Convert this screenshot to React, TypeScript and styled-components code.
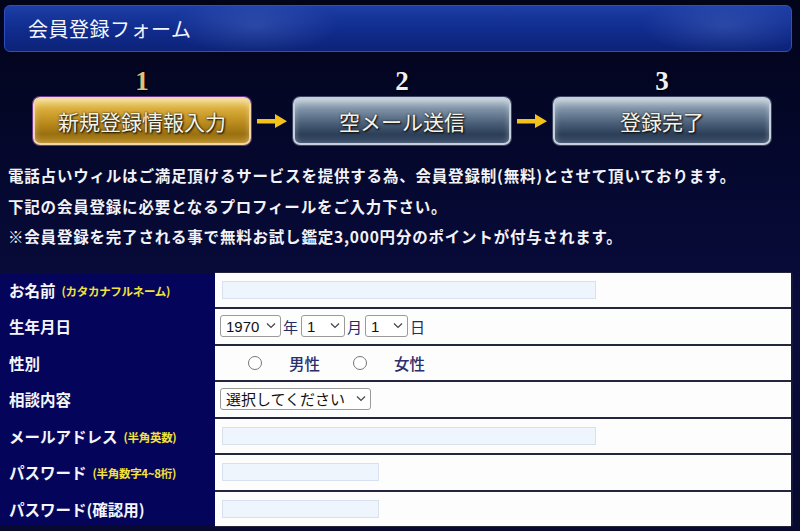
import React from 'react';
import styled, { createGlobalStyle } from 'styled-components';

const Global = createGlobalStyle`
  html, body { margin: 0; padding: 0; }
  body {
    background: #070a2c;
    font-family: "Noto Sans CJK JP", "Noto Sans", sans-serif;
  }
`;

const Page = styled.div`
  width: 800px;
  height: 531px;
  overflow: hidden;
  background: linear-gradient(180deg, #02041a 0%, #060933 40%, #0a0c3c 60%, #07092e 100%);
  padding-top: 5px;
  box-sizing: border-box;
`;

const Header = styled.div`
  margin: 0 8px 0 4px;
  height: 47px;
  box-sizing: border-box;
  border: 1px solid #2f4fc0;
  border-radius: 6px;
  background:
    radial-gradient(ellipse 120px 40px at 250px 20px, rgba(120,150,230,0.25), transparent 70%),
    radial-gradient(ellipse 120px 40px at 720px 20px, rgba(120,150,230,0.25), transparent 70%),
    linear-gradient(180deg, #1d3ea6 0%, #102c8e 50%, #0c2378 100%);
  display: flex;
  align-items: center;
  padding-left: 23px;
  color: #f4f6ff;
  font-size: 20px;
  letter-spacing: 0.5px;
`;

const Steps = styled.div`
  display: flex;
  align-items: flex-end;
  padding-left: 33px;
  margin-top: 14px;
`;

const Step = styled.div`
  display: flex;
  flex-direction: column;
  align-items: center;
  width: 218px;
`;

const Num = styled.div<{ $active?: boolean }>`
  font-family: "Liberation Serif", "DejaVu Serif", serif;
  font-weight: bold;
  font-size: 27px;
  line-height: 30px;
  color: ${p => (p.$active ? '#dcc27a' : '#eef0f4')};
  text-shadow: 0 0 2px #000, 1px 1px 2px #000;
  margin-bottom: 1px;
`;

const StepBtn = styled.div<{ $active?: boolean }>`
  width: 100%;
  height: 48px;
  box-sizing: border-box;
  border-radius: 7px;
  display: flex;
  align-items: center;
  justify-content: center;
  font-size: 21px;
  color: #f6f3e6;
  text-shadow: 0 0 2px #222, 1px 1px 2px #000;
  border: 2px solid ${p => (p.$active ? '#f2d6a6' : '#c6d0dc')};
  box-shadow: 0 0 0 1px ${p => (p.$active ? '#6a3a8a' : '#3a4660')}, inset 0 2px 6px rgba(255,255,255,0.35);
  background: ${p =>
    p.$active
      ? 'linear-gradient(180deg, #f2d67e 0%, #d8aa38 25%, #b98a1c 55%, #9a7010 80%, #b88c2a 100%)'
      : 'linear-gradient(180deg, #b6c4d2 0%, #7a8ea4 25%, #4b5f78 55%, #2c3e58 80%, #3b4e68 100%)'};
`;

const ArrowBox = styled.div`
  width: 42px;
  height: 48px;
  display: flex;
  align-items: center;
  justify-content: center;
`;

const Intro = styled.div`
  margin-top: 15px;
  padding-left: 8px;
  color: #f2f3f8;
  font-size: 15.5px;
  font-weight: bold;
  line-height: 30.5px;
  letter-spacing: 0.8px;
`;

const Table = styled.div`
  margin-top: 21px;
  width: 793px;
  display: grid;
  grid-template-columns: 213px 1fr;
  column-gap: 2px;
  row-gap: 2px;
  background: #04055a;
  border-right: 2px solid #14163a;
  box-sizing: border-box;
`;

const Label = styled.div`
  height: 34.5px;
  display: flex;
  align-items: center;
  padding-left: 9px;
  color: #f4f5fb;
  font-size: 15.5px;
  font-weight: bold;
  background: #04055a;
`;

const Note = styled.span`
  color: #f2e23a;
  font-size: 11.5px;
  font-weight: bold;
  margin-left: 6px;
  margin-top: 2px;
  letter-spacing: -0.3px;
`;

const Cell = styled.div`
  height: 34.5px;
  background: #fdfdfe;
  display: flex;
  align-items: center;
  padding-left: 5px;
  color: #232a66;
  font-size: 15px;
  box-shadow: 0 1px 0 #24263e, 0 -1px 0 #24263e;
`;

const TextBox = styled.input<{ $w: number }>`
  width: ${p => p.$w}px;
  height: 18px;
  box-sizing: border-box;
  margin-left: 2px;
  background: #eef5fd;
  border: 1px solid #d8e2ee;
  outline: none;
`;

const SelWrap = styled.span`
  position: relative;
  display: inline-flex;
`;

const Sel = styled.select<{ $w: number }>`
  appearance: none;
  width: ${p => p.$w}px;
  height: 22px;
  box-sizing: border-box;
  border: 1px solid #9a9a9a;
  border-radius: 3px;
  background: #fff;
  font-family: "Liberation Sans", "Noto Sans CJK JP", sans-serif;
  font-size: 15px;
  color: #111;
  padding: 0 0 0 5px;
`;

const Chevron = styled.svg`
  position: absolute;
  right: 5px;
  top: 7px;
  pointer-events: none;
`;

const Unit = styled.span`
  margin: 0 3px 0 2px;
  font-size: 15px;
`;

const Radios = styled.div`
  display: flex;
  align-items: center;
  padding-left: 28px;
`;

const RadioItem = styled.label`
  display: flex;
  align-items: center;
  margin-right: 33px;
  font-size: 15.5px;
  font-weight: 500;
  color: #2a2f6e;
  input {
    margin: 0 27px 0 0;
    width: 14px;
    height: 14px;
  }
`;

const Arrow = () => (
  <svg width="32" height="16" viewBox="0 0 32 16">
    <rect x="1" y="6" width="20" height="4.5" fill="#f3c21a" />
    <path d="M19 1 L31 8.2 L19 15 Z" fill="#f3c21a" />
  </svg>
);

const Select = ({ w, value, options }: { w: number; value: string; options: string[] }) => (
  <SelWrap>
    <Sel $w={w} defaultValue={value}>
      {options.map(o => (
        <option key={o}>{o}</option>
      ))}
    </Sel>
    <Chevron width="10" height="7" viewBox="0 0 10 7">
      <path d="M1 1.5 L5 5.5 L9 1.5" stroke="#444" strokeWidth="1.2" fill="none" />
    </Chevron>
  </SelWrap>
);

const steps = [
  { n: '1', t: '新規登録情報入力', active: true },
  { n: '2', t: '空メール送信' },
  { n: '3', t: '登録完了' },
];

const App = () => {
  const years = Array.from({ length: 60 }, (_, i) => String(1940 + i));
  const months = Array.from({ length: 12 }, (_, i) => String(i + 1));
  const days = Array.from({ length: 31 }, (_, i) => String(i + 1));
  return (
    <Page>
      <Global />
      <Header>会員登録フォーム</Header>
      <Steps>
        {steps.map((s, i) => (
          <React.Fragment key={s.n}>
            {i > 0 && (
              <ArrowBox>
                <Arrow />
              </ArrowBox>
            )}
            <Step>
              <Num $active={s.active}>{s.n}</Num>
              <StepBtn $active={s.active}>{s.t}</StepBtn>
            </Step>
          </React.Fragment>
        ))}
      </Steps>
      <Intro>
        電話占いウィルはご満足頂けるサービスを提供する為、会員登録制(無料)とさせて頂いております。
        <br />
        下記の会員登録に必要となるプロフィールをご入力下さい。
        <br />
        ※会員登録を完了される事で無料お試し鑑定3,000円分のポイントが付与されます。
      </Intro>
      <Table>
        <Label>
          お名前<Note>(カタカナフルネーム)</Note>
        </Label>
        <Cell>
          <TextBox $w={374} />
        </Cell>

        <Label>生年月日</Label>
        <Cell>
          <Select w={61} value="1970" options={years} />
          <Unit>年</Unit>
          <Select w={44} value="1" options={months} />
          <Unit>月</Unit>
          <Select w={43} value="1" options={days} />
          <Unit>日</Unit>
        </Cell>

        <Label>性別</Label>
        <Cell>
          <Radios>
            <RadioItem>
              <input type="radio" name="sex" />
              男性
            </RadioItem>
            <RadioItem>
              <input type="radio" name="sex" />
              女性
            </RadioItem>
          </Radios>
        </Cell>

        <Label>相談内容</Label>
        <Cell>
          <Select w={151} value="選択してください" options={['選択してください', '恋愛', '仕事', '人間関係']} />
        </Cell>

        <Label>
          メールアドレス<Note>(半角英数)</Note>
        </Label>
        <Cell>
          <TextBox $w={374} />
        </Cell>

        <Label>
          パスワード<Note>(半角数字4~8桁)</Note>
        </Label>
        <Cell>
          <TextBox $w={157} type="password" />
        </Cell>

        <Label>パスワード(確認用)</Label>
        <Cell>
          <TextBox $w={157} type="password" />
        </Cell>
      </Table>
    </Page>
  );
};

export default App;
